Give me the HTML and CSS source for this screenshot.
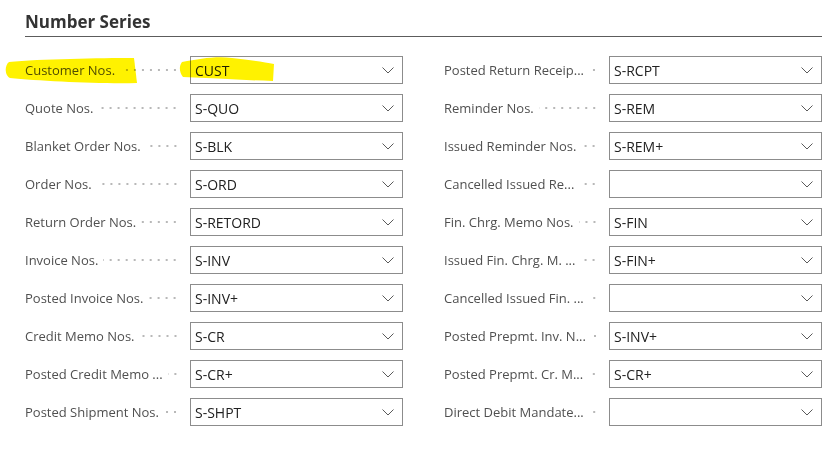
FILE: index.html
```html
<!DOCTYPE html>
<html lang="en">
<head>
    <meta charset="UTF-8">
    <title>Number Series</title>
    <link rel="stylesheet" href="styles.css">
</head>
<body>
    <section class="group">
        <h2 class="group-title">Number Series</h2>

        <div class="fields" id="fields">
            <svg class="marker" width="290" height="40" viewBox="0 0 290 40">
                <path d="M9 12 C40 9 100 8 134 8 L137 33 C100 34 40 31 10 28 C5 26 4 16 9 12 Z" />
                <path d="M182 12 C200 9 215 6 232 8 C250 10 265 12 274 14 L273 31 C240 30 210 28 183 27 C179 22 179 16 182 12 Z" />
            </svg>
        </div>
    </section>

    <script>
        // labels are cut the way the page shows them
        const left = [
            ['Customer Nos.', 'CUST'],
            ['Quote Nos.', 'S-QUO'],
            ['Blanket Order Nos.', 'S-BLK'],
            ['Order Nos.', 'S-ORD'],
            ['Return Order Nos.', 'S-RETORD'],
            ['Invoice Nos.', 'S-INV'],
            ['Posted Invoice Nos.', 'S-INV+'],
            ['Credit Memo Nos.', 'S-CR'],
            ['Posted Credit Memo ...', 'S-CR+'],
            ['Posted Shipment Nos.', 'S-SHPT']
        ];
        const right = [
            ['Posted Return Receip...', 'S-RCPT'],
            ['Reminder Nos.', 'S-REM'],
            ['Issued Reminder Nos.', 'S-REM+'],
            ['Cancelled Issued Re...', ''],
            ['Fin. Chrg. Memo Nos.', 'S-FIN'],
            ['Issued Fin. Chrg. M. ...', 'S-FIN+'],
            ['Cancelled Issued Fin. ...', ''],
            ['Posted Prepmt. Inv. N...', 'S-INV+'],
            ['Posted Prepmt. Cr. M...', 'S-CR+'],
            ['Direct Debit Mandate...', '']
        ];

        function field([label, value]) {
            return `
                <div class="field">
                    <div class="field-label">
                        <span class="caption">${label}</span>
                        <span class="leader"></span>
                    </div>
                    <div class="select">
                        <span class="value">${value}</span>
                        <svg class="chevron" width="12" height="7" viewBox="0 0 12 7"><path d="M0.5 0.5 L6 6 L11.5 0.5" /></svg>
                    </div>
                </div>
            `;
        }

        const fields = document.getElementById('fields');
        const cols = [left, right].map(list => `<div class="column">${list.map(field).join('')}</div>`);
        fields.insertAdjacentHTML('beforeend', cols.join(''));
    </script>
</body>
</html>
```

FILE: styles.css
```css
* {
    margin: 0;
    padding: 0;
    box-sizing: border-box;
    font-family: "Open Sans", "Noto Sans", sans-serif;
}

body {
    background-color: #fff;
    color: #212121;
}

.group {
    padding: 10px 12px 0 25px;
}

.group-title {
    font-size: 17px;
    font-weight: 700;
    line-height: 23px;
    color: #333;
    padding-bottom: 3px;
    border-bottom: 1px solid #5c5c5c;
}

.fields {
    position: relative;
    display: grid;
    grid-template-columns: 378px 378px;
    column-gap: 41px;
    margin-top: 19px;
}

.marker {
    position: absolute;
    left: -25px;
    top: -6px;
    mix-blend-mode: multiply;
}

.marker path {
    fill: #fff200;
}

.column {
    display: flex;
    flex-direction: column;
    gap: 10px;
}

.field {
    display: flex;
    align-items: center;
    height: 28px;
}

.field-label {
    width: 165px;
    display: flex;
    align-items: center;
    padding-right: 11px;
    font-size: 13px;
    color: #505050;
}

.caption {
    white-space: nowrap;
}

.leader {
    flex: 1;
    min-width: 8px;
    height: 2px;
    margin-left: 5px;
    background-image: radial-gradient(circle, #b8b8b8 0.8px, transparent 1.1px);
    background-size: 8px 2px;
    background-repeat: repeat-x;
    background-position: right center;
}

.select {
    width: 213px;
    height: 28px;
    border: 1px solid #8c8c8c;
    display: flex;
    align-items: center;
    justify-content: space-between;
    padding: 0 8px 0 4px;
}

.value {
    font-size: 14px;
    color: #212121;
}

.chevron path {
    fill: none;
    stroke: #5a5a5a;
    stroke-width: 1;
}
```
